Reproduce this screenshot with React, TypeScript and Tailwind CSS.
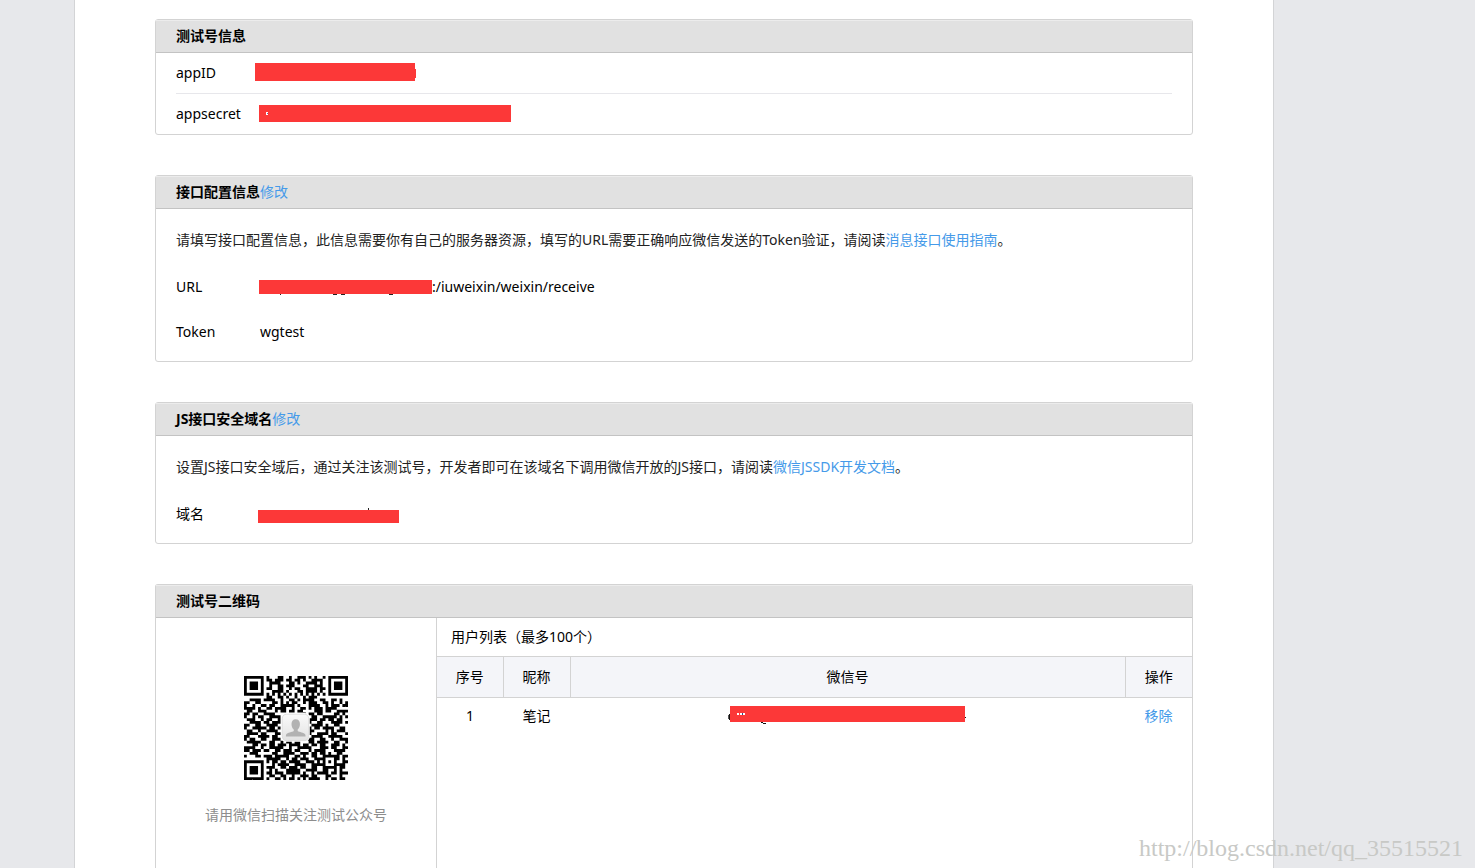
import type { ReactNode } from "react";

interface Mark {
  x: number;
  y: number;
  w: number;
  h: number;
  fill: string;
}

interface RedactedProps {
  width: number;
  height: number;
  marks?: Mark[];
  className?: string;
}

// Solid bar over a private value, with the few pixels of text left visible
const Redacted = ({ width, height, marks = [], className }: RedactedProps) => {
  return (
    <svg
      width={width}
      height={height}
      className={`shrink-0 overflow-visible ${className ?? ""}`}
      shapeRendering="crispEdges"
      aria-hidden="true"
    >
      <rect width={width} height={height} fill="#fc3838" />
      {marks.map((m, i) => (
        <rect key={i} x={m.x} y={m.y} width={m.w} height={m.h} fill={m.fill} />
      ))}
    </svg>
  );
};

const qrRows = [
  "#######.#...##..#..###.#.#..#.#######",
  "#.....#.##.###.##.##.#..####..#.....#",
  "#.###.#..####...##.#..####.#..#.###.#",
  "#.###.#..#..##.###...##..###..#.###.#",
  "#.###.#.##..##..#.##..####.##.#.###.#",
  "#.....#...####.#...##.####.#..#.....#",
  "#######.#.#.#.#.#.#.#.#.#.#.#.#######",
  "........##..##.#..#..#.###...........",
  "..####.####..#..##.#.####..##..##.#..",
  "##..##....##.#.#.##..#.###..##.#..#.#",
  "#..#..##.##..#####.#...####..#.###.##",
  "####.#..##.####..#..##.#.###.####....",
  ".##..###...#.##.##.##....###.##..####",
  "##.##..####..........#.##.##....##.#.",
  "#..#.##..####........#..##..#####.#.#",
  ".###..#.##..#.........####.##.##.##..",
  "..####.##.###..........#..##...####.#",
  "##..##..####............####.#..##...",
  "#..#####.##.#..........#.##.####..##.",
  ".##..#..####...........##....#.#.###.",
  ".####.##...##.........##..####.##...#",
  "##...####.##..........#.####..#####..",
  "#.##..##..###.........###..##..#..###",
  ".#####...##..#.##.##...##.####..##..#",
  "...##.##.##.###.####.##.##.##..###.#.",
  "####..#..#####..#..#####...###.##..##",
  "##.###.##..##.###.##...#.####...####.",
  "..###.....##..####..###.##.##.#..##..",
  "#...##.###.#####..##.#..##..######.##",
  "........#####..#.##.###..####...##.#.",
  "#######.#.##.##.####..###.#.#.#.#..##",
  "#.....#...#.####..####..#####...####.",
  "#.###.#.###..##.###.##..##..#####.##.",
  "#.###.#..#.#...#####..####..##..#.#..",
  "#.###.#.##.###.#####.#..#.####.##.###",
  "#.....#..##..##..#..###.##...##...#..",
  "#######.#..##.#.##.#.#.####..#.##.##.",
];

const qrPath = qrRows
  .map((row, y) =>
    row
      .split("")
      .map((cell, x) => (cell === "#" ? `M${x} ${y}h1v1h-1z` : ""))
      .join("")
  )
  .join("");

const QrCode = () => {
  return (
    <svg
      width="104"
      height="104"
      viewBox="0 0 37 37"
      role="img"
      aria-label="测试号二维码"
    >
      <defs>
        <linearGradient id="avatar" x1="0" y1="0" x2="0" y2="1">
          <stop offset="0" stopColor="#fafafa" />
          <stop offset="1" stopColor="#e2e2e2" />
        </linearGradient>
      </defs>
      <path d={qrPath} fill="#000" />
      <rect x="13.2" y="13.2" width="10.2" height="10.2" rx="1.8" fill="#fff" />
      <rect
        x="13.6"
        y="13.6"
        width="9.4"
        height="9.4"
        rx="1.5"
        fill="url(#avatar)"
        stroke="#d6d6d6"
        strokeWidth="0.25"
      />
      <path
        d="M18.4 15.4c-.9 0-1.5.7-1.5 1.7 0 .9.3 1.5.8 1.900v.6c-.5.4-2.300.6-2.700 1.200-.1.200-.1.400-.1.700h7c0-.3 0-.5-.1-.7-.4-.6-2.200-.8-2.700-1.200V19c.5-.4.8-1 .8-1.900 0-1-.6-1.700-1.500-1.700z"
        fill="#b2b2b2"
      />
    </svg>
  );
};

interface CardProps {
  title: string;
  edit?: boolean;
  className?: string;
  children: ReactNode;
}

const Card = ({ title, edit, className, children }: CardProps) => {
  return (
    <section
      className={`flex flex-col rounded-[3px] border border-[#d3d3d3] ${
        className ?? ""
      }`}
    >
      <h2 className="flex h-[33px] items-center border-t border-b border-t-[#ececec] border-b-[#c3c3c3] bg-[#e1e1e1] px-5 pb-0.5 font-bold">
        {title}
        {edit && (
          <a href="#" className="font-normal text-[#459ae9]">
            修改
          </a>
        )}
      </h2>
      {children}
    </section>
  );
};

interface FieldProps {
  label: string;
  className: string;
  children: ReactNode;
}

const Field = ({ label, className, children }: FieldProps) => {
  return (
    <div className={`flex items-center ${className}`}>
      <dt className="shrink-0">{label}</dt>
      <dd className="flex items-center">{children}</dd>
    </div>
  );
};

const App = () => {
  return (
    <div className="relative min-h-screen bg-[#e7e8eb] pr-[201px] pl-[74px] font-['Noto_Sans','Noto_Sans_CJK_SC',sans-serif] text-sm leading-5 text-black">
      <main className="flex min-h-screen flex-col gap-10 border-x border-[#d3d4d6] bg-white px-20 pt-[19px]">
        <Card title="测试号信息">
          <dl className="px-5">
            <Field
              label="appID"
              className="h-[41px] border-b border-[#e7e7eb] [&>dt]:w-[79px]"
            >
              <Redacted
                width={160}
                height={18}
                className="mb-0.5"
                marks={[{ x: 160, y: 6, w: 1, h: 9, fill: "#fc3838" }]}
              />
            </Field>
            <Field label="appsecret" className="h-10 [&>dt]:w-[83px]">
              <Redacted
                width={252}
                height={17}
                className="mb-0.5"
                marks={[
                  { x: 7, y: 7, w: 2, h: 3, fill: "#fff" },
                  { x: 8, y: 8, w: 1, h: 1, fill: "#5b6fa8" },
                ]}
              />
            </Field>
          </dl>
        </Card>

        <Card title="接口配置信息" edit>
          <div className="px-5 pt-2 pb-[9px]">
            <p className="leading-[45px] text-[#222]">
              请填写接口配置信息，此信息需要你有自己的服务器资源，填写的URL需要正确响应微信发送的Token验证，请阅读
              <a href="#" className="text-[#459ae9]">
                消息接口使用指南
              </a>
              。
            </p>
            <dl className="pt-0.5 -mb-0.5">
              <Field label="URL" className="h-[45px] [&>dt]:w-[83px]">
                <Redacted
                  width={173}
                  height={14}
                  marks={[
                    { x: 21, y: 14, w: 1, h: 1, fill: "#222" },
                    { x: 74, y: 14, w: 4, h: 1, fill: "#222" },
                    { x: 82, y: 14, w: 4, h: 1, fill: "#222" },
                    { x: 130, y: 14, w: 4, h: 1, fill: "#222" },
                  ]}
                />
                <span>:/iuweixin/weixin/receive</span>
              </Field>
              <Field label="Token" className="h-[45px] [&>dt]:w-[84px]">
                wgtest
              </Field>
            </dl>
          </div>
        </Card>

        <Card title="JS接口安全域名" edit>
          <div className="px-5 pt-2 pb-[9px]">
            <p className="leading-[45px] text-[#222]">
              设置JS接口安全域后，通过关注该测试号，开发者即可在该域名下调用微信开放的JS接口，请阅读
              <a href="#" className="text-[#459ae9]">
                微信JSSDK开发文档
              </a>
              。
            </p>
            <dl className="pt-0.5 -mb-0.5">
              <Field label="域名" className="h-[45px] [&>dt]:w-[82px]">
                <Redacted
                  width={141}
                  height={13}
                  className="mt-1.5"
                  marks={[{ x: 110, y: -2, w: 1, h: 2, fill: "#222" }]}
                />
              </Field>
            </dl>
          </div>
        </Card>

        <Card title="测试号二维码" className="flex-1 rounded-b-none border-b-0">
          <div className="flex flex-1">
            <div className="flex w-[281px] shrink-0 flex-col items-center gap-[25px] border-r border-[#d3d3d3] pt-[58px]">
              <QrCode />
              <p className="text-[#8d8d8d]">请用微信扫描关注测试公众号</p>
            </div>
            <div className="flex-1">
              <h3 className="px-3.5 leading-[38px]">用户列表（最多100个）</h3>
              <table className="w-full table-fixed border-collapse text-center">
                <thead>
                  <tr className="h-[41px] border-y border-[#d3d3d3] bg-[#f4f5f9]">
                    <th className="w-[66px] border-r border-[#d3d3d3] font-normal">
                      序号
                    </th>
                    <th className="w-[67px] border-r border-[#d3d3d3] font-normal">
                      昵称
                    </th>
                    <th className="border-r border-[#d3d3d3] font-normal">
                      微信号
                    </th>
                    <th className="w-[67px] font-normal">操作</th>
                  </tr>
                </thead>
                <tbody>
                  <tr className="h-[37px]">
                    <td>1</td>
                    <td>笔记</td>
                    <td>
                      <Redacted
                        width={235}
                        height={16}
                        className="mx-auto mb-1"
                        marks={[
                          { x: -2, y: 9, w: 1, h: 4, fill: "#555" },
                          { x: -1, y: 8, w: 1, h: 6, fill: "#111" },
                          { x: 7, y: 7, w: 2, h: 2, fill: "#fff" },
                          { x: 10, y: 7, w: 2, h: 2, fill: "#fff" },
                          { x: 12, y: 7, w: 1, h: 2, fill: "#2b4a86" },
                          { x: 13, y: 7, w: 2, h: 2, fill: "#fff" },
                          { x: 31, y: 16, w: 2, h: 1, fill: "#111" },
                          { x: 33, y: 17, w: 3, h: 1, fill: "#111" },
                          { x: 235, y: 11, w: 1, h: 1, fill: "#111" },
                        ]}
                      />
                    </td>
                    <td>
                      <a href="#" className="text-[#459ae9]">
                        移除
                      </a>
                    </td>
                  </tr>
                </tbody>
              </table>
            </div>
          </div>
        </Card>
      </main>

      <span className="absolute right-3 bottom-1 font-['Liberation_Serif',serif] text-2xl leading-8 text-[#c8c9c6]">
        http://blog.csdn.net/qq_35515521
      </span>
    </div>
  );
};

export default App;
